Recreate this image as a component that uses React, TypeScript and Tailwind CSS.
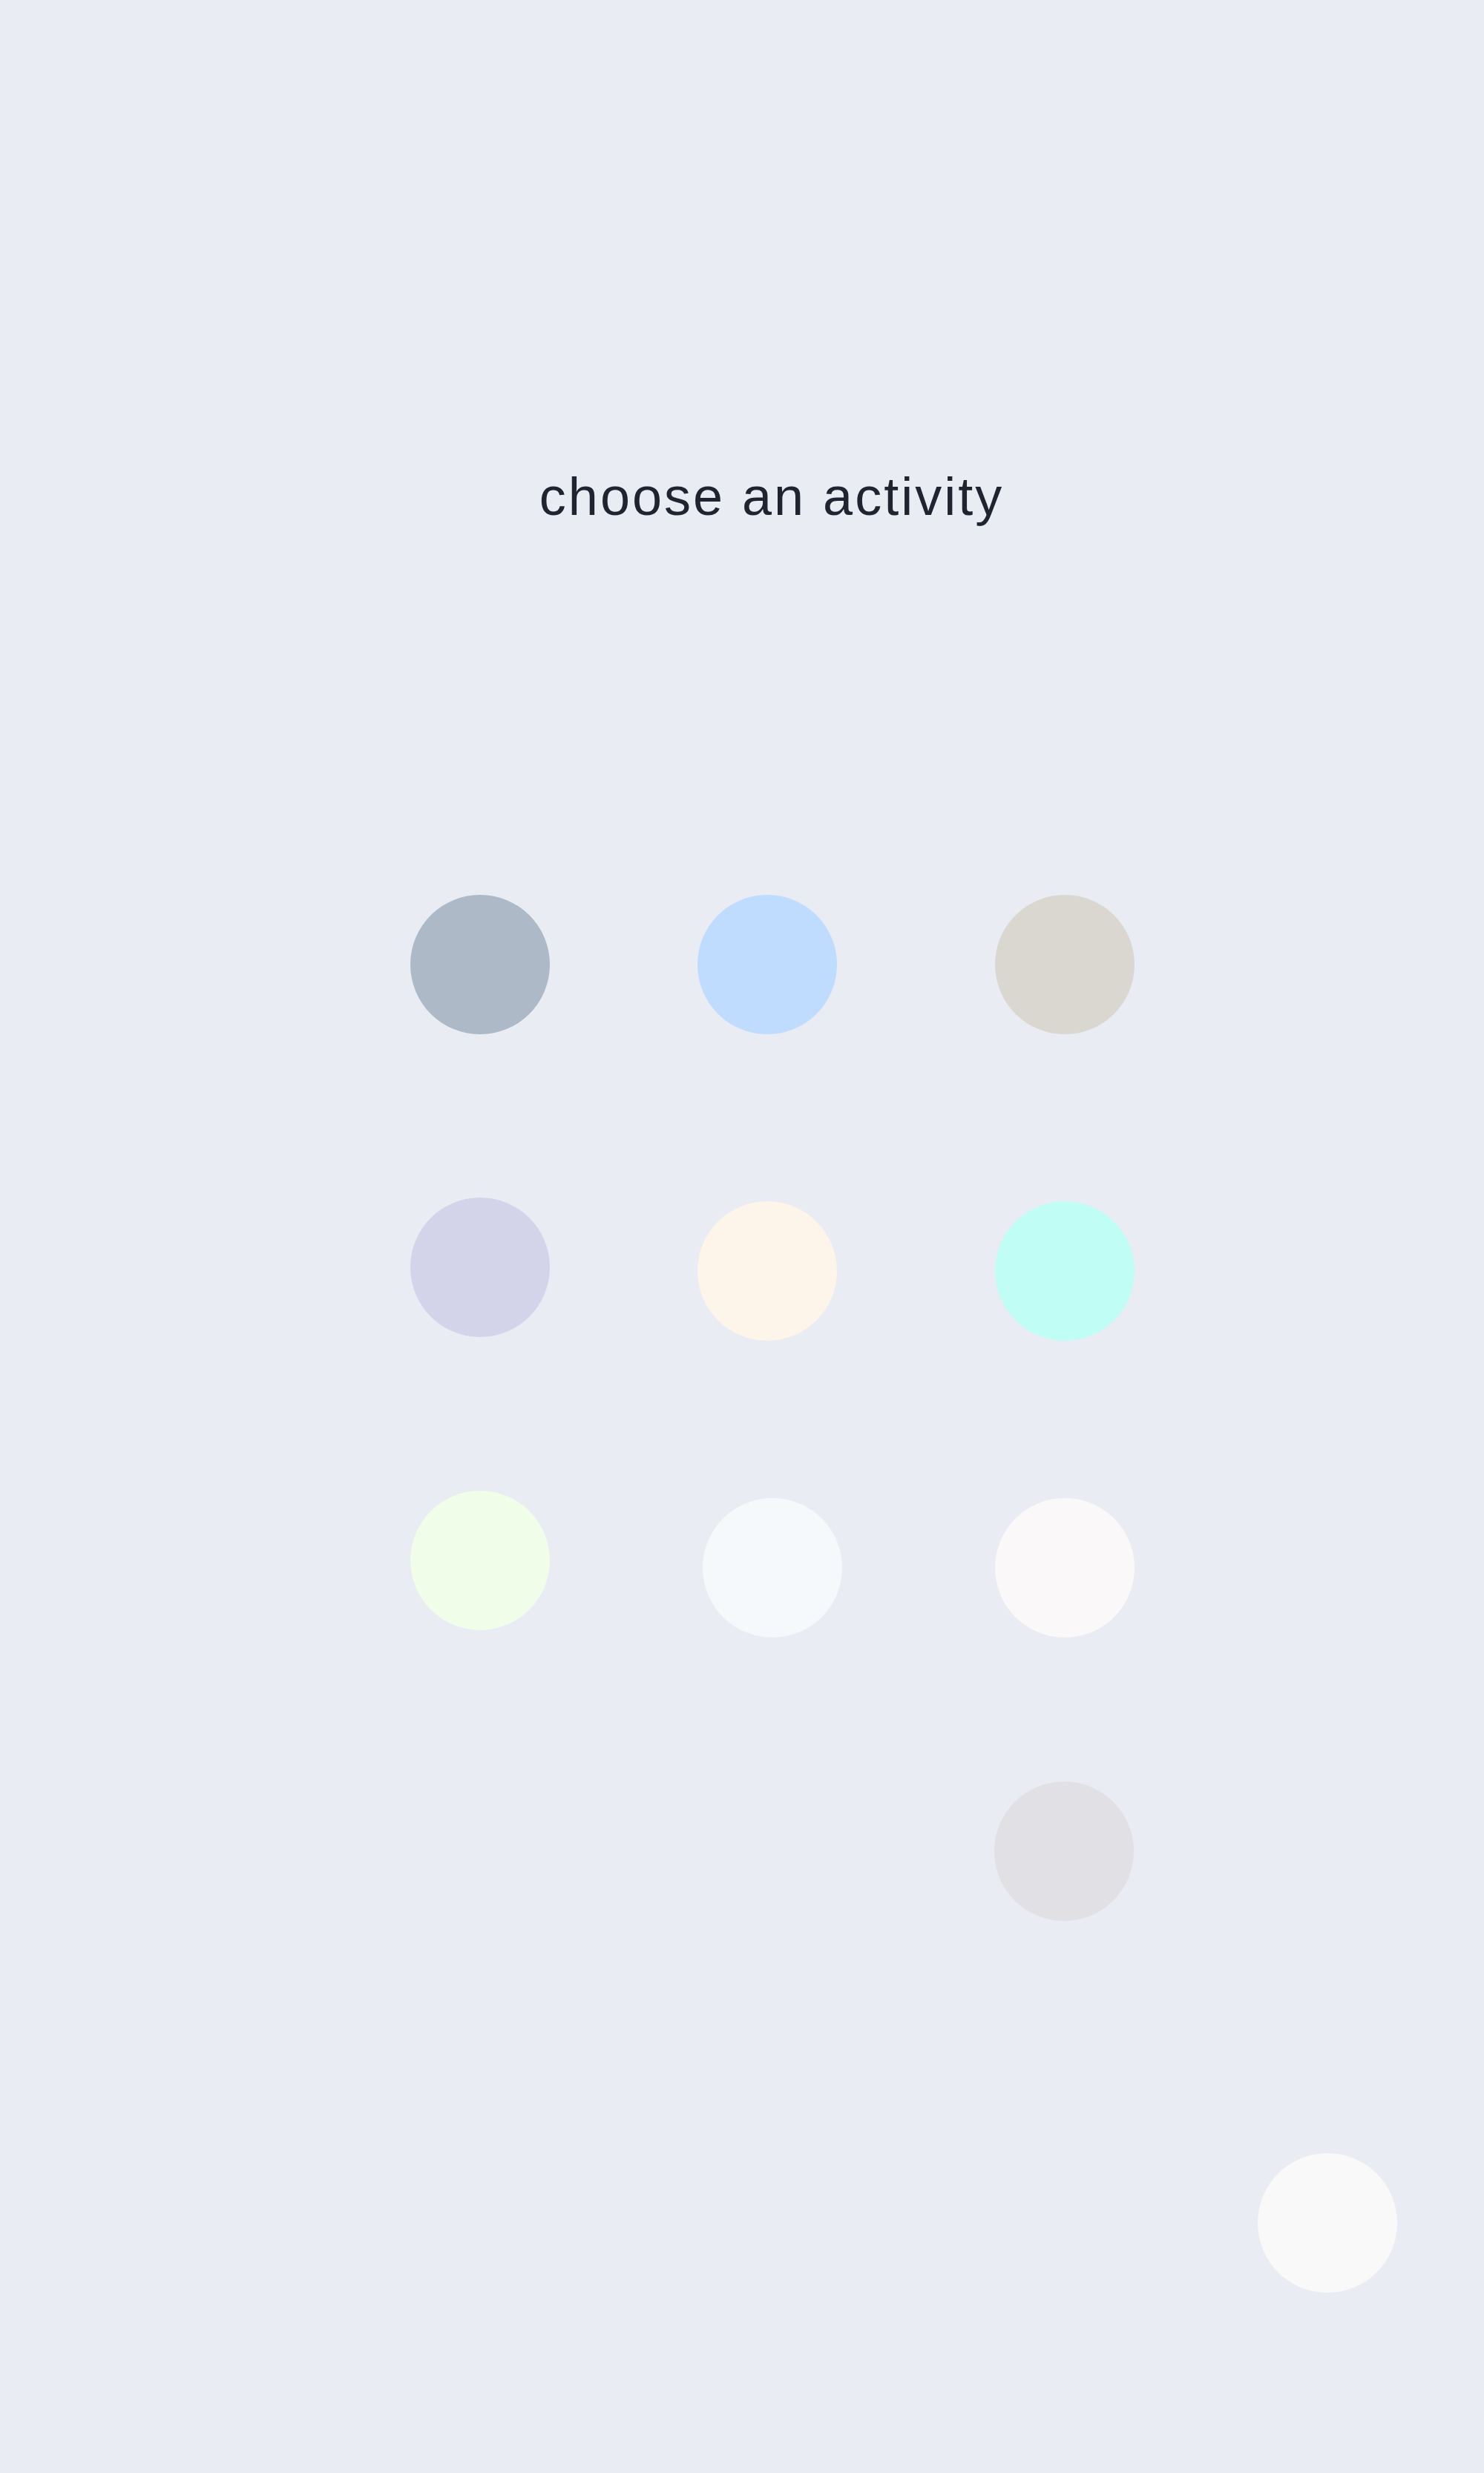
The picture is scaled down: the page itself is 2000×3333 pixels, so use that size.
const activities = [
    [
        { color: "bg-[#adb9c7]", shift: "" },
        { color: "bg-[#bfdbfe]", shift: "ml-[199px]" },
        { color: "bg-[#d9d7cf]", shift: "ml-[213px]" },
    ],
    [
        { color: "bg-[#d3d3ea]", shift: "" },
        { color: "bg-[#fdf4ea]", shift: "ml-[199px] mt-[5px]" },
        { color: "bg-[#c0fdf4]", shift: "ml-[213px] mt-[5px]" },
    ],
    [
        { color: "bg-[#f0fde8]", shift: "" },
        { color: "bg-[#f5f9fc]", shift: "ml-[206px] mt-[10px]" },
        { color: "bg-[#faf8f9]", shift: "ml-[206px] mt-[10px]" },
    ],
];

function Dot({ className }: { className: string }) {
    return <button className={`size-[188px] rounded-full shrink-0 ${className}`} />;
}

export default function App() {
    return (
        <div className="relative min-h-[3333px] w-full bg-[#e9ecf3] pl-[80px] font-['Liberation_Sans',Arial,sans-serif]">
            <div className="mx-auto flex w-[975px] flex-col">
                {/* Title */}
                <h1 className="mt-[633px] text-center text-[72px] leading-none tracking-[3px] text-[#1f2430]">
                    choose an activity
                </h1>

                {/* Grid of activities */}
                <div className="mt-[501px] flex flex-col">
                    <div className="flex items-start">
                        {activities[0].map((a, i) => (
                            <Dot key={i} className={`${a.color} ${a.shift}`} />
                        ))}
                    </div>
                    <div className="mt-[220px] flex items-start">
                        {activities[1].map((a, i) => (
                            <Dot key={i} className={`${a.color} ${a.shift}`} />
                        ))}
                    </div>
                    <div className="mt-[202px] flex items-start">
                        {activities[2].map((a, i) => (
                            <Dot key={i} className={`${a.color} ${a.shift}`} />
                        ))}
                    </div>
                    <div className="mt-[194px] flex items-start justify-end">
                        <Dot className="bg-[#e0e0e5]" />
                    </div>
                </div>
            </div>

            {/* Floating button */}
            <button className="absolute bottom-[243px] right-[117px] size-[188px] rounded-full bg-[#faf9fa]" />
        </div>
    );
}
